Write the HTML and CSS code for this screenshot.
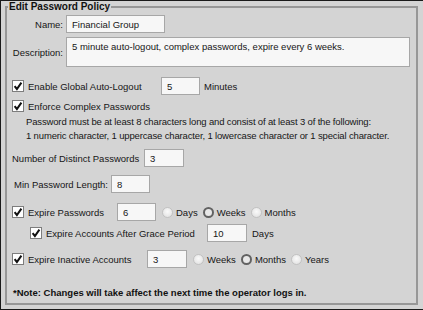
FILE: index.html
```html
<!DOCTYPE html>
<html lang="en">

<head>
    <meta charset="UTF-8">
    <meta name="viewport" content="width=device-width, initial-scale=1.0">
    <title>Edit Password Policy</title>
    <link rel="stylesheet" href="styles.css">
</head>

<body>
    <div class="window">
        <fieldset class="policy">
            <legend>Edit Password Policy</legend>

            <div class="row row-name">
                <label class="field-label">Name:</label>
                <input type="text" class="text-input name-input" value="Financial Group">
            </div>

            <div class="row row-desc">
                <label class="field-label">Description:</label>
                <textarea class="text-input desc-input">5 minute auto-logout, complex passwords, expire every 6 weeks.</textarea>
            </div>

            <div class="row row-auto">
                <span class="check"><svg width="12" height="12" viewBox="0 0 12 12"><rect x="0.5" y="0.5" width="11" height="11" fill="#fff" stroke="#7d7d7d"/><path d="M2.6 6.2 L4.9 9 L9.4 2.6" fill="none" stroke="#111" stroke-width="2"/></svg></span>
                <span class="check-text lbl-auto">Enable Global Auto-Logout</span>
                <input type="text" class="text-input small-input" value="5">
                <span class="unit">Minutes</span>
            </div>

            <div class="row row-complex">
                <span class="check"><svg width="12" height="12" viewBox="0 0 12 12"><rect x="0.5" y="0.5" width="11" height="11" fill="#fff" stroke="#7d7d7d"/><path d="M2.6 6.2 L4.9 9 L9.4 2.6" fill="none" stroke="#111" stroke-width="2"/></svg></span>
                <span class="check-text">Enforce Complex Passwords</span>
            </div>
            <div class="help-text">
                <div>Password must be at least 8 characters long and consist of at least 3 of the following:</div>
                <div>1 numeric character, 1 uppercase character, 1 lowercase character or 1 special character.</div>
            </div>

            <div class="row row-distinct">
                <label class="plain-label lbl-distinct">Number of Distinct Passwords</label>
                <input type="text" class="text-input distinct-input" value="3">
            </div>

            <div class="row row-min">
                <label class="plain-label lbl-min">Min Password Length:</label>
                <input type="text" class="text-input small-input" value="8">
            </div>

            <div class="row row-expire">
                <span class="check"><svg width="12" height="12" viewBox="0 0 12 12"><rect x="0.5" y="0.5" width="11" height="11" fill="#fff" stroke="#7d7d7d"/><path d="M2.6 6.2 L4.9 9 L9.4 2.6" fill="none" stroke="#111" stroke-width="2"/></svg></span>
                <span class="check-text lbl-expire">Expire Passwords</span>
                <input type="text" class="text-input small-input" value="6">
                <div class="radio-group">
                    <span class="radio-option"><span class="radio"></span>Days</span>
                    <span class="radio-option"><span class="radio selected"></span>Weeks</span>
                    <span class="radio-option"><span class="radio"></span>Months</span>
                </div>
            </div>

            <div class="row row-grace">
                <span class="check"><svg width="12" height="12" viewBox="0 0 12 12"><rect x="0.5" y="0.5" width="11" height="11" fill="#fff" stroke="#7d7d7d"/><path d="M2.6 6.2 L4.9 9 L9.4 2.6" fill="none" stroke="#111" stroke-width="2"/></svg></span>
                <span class="check-text lbl-grace">Expire Accounts After Grace Period</span>
                <input type="text" class="text-input distinct-input" value="10">
                <span class="unit unit-days">Days</span>
            </div>

            <div class="row row-inactive">
                <span class="check"><svg width="12" height="12" viewBox="0 0 12 12"><rect x="0.5" y="0.5" width="11" height="11" fill="#fff" stroke="#7d7d7d"/><path d="M2.6 6.2 L4.9 9 L9.4 2.6" fill="none" stroke="#111" stroke-width="2"/></svg></span>
                <span class="check-text lbl-inactive">Expire Inactive Accounts</span>
                <input type="text" class="text-input distinct-input" value="3">
                <div class="radio-group">
                    <span class="radio-option"><span class="radio"></span>Weeks</span>
                    <span class="radio-option"><span class="radio selected"></span>Months</span>
                    <span class="radio-option"><span class="radio"></span>Years</span>
                </div>
            </div>

            <p class="note">*Note: Changes will take affect the next time the operator logs in.</p>
        </fieldset>
    </div>
</body>

</html>
```

FILE: styles.css
```css
body {
    margin: 0;
    font-family: 'Liberation Sans', Arial, sans-serif;
    font-size: 9.5px;
    color: #161616;
    background-color: #d4d4d4;
}

.window {
    box-sizing: border-box;
    width: 423px;
    height: 310px;
    display: flex;
    flex-direction: column;
    padding: 0 5px 4px 4px;
    background-color: #d4d4d4;
    border-top: 1px solid #1a1a1a;
    border-left: 1px solid #1a1a1a;
    border-bottom: 1px solid #1a1a1a;
}

.policy {
    flex: 1;
    margin: 0;
    padding: 0;
    min-width: 0;
    border: 2px solid #979797;
}

.policy legend {
    font-size: 10px;
    font-weight: bold;
    line-height: 12px;
    padding: 0 1px;
    margin-left: 1px;
    color: #111;
}

.row {
    display: flex;
    align-items: center;
    height: 18px;
}

/* TEXT FIELDS */
.text-input {
    box-sizing: border-box;
    height: 18px;
    margin: 0;
    padding: 0 5px;
    font-family: inherit;
    font-size: 9.5px;
    color: #161616;
    background-color: #f7f7f7;
    border: 1px solid #a7a7a7;
    border-radius: 0;
    outline: none;
}

.field-label {
    width: 56px;
    margin-right: 3px;
    text-align: right;
}

.name-input {
    width: 99px;
}

.desc-input {
    width: 344px;
    height: 30px;
    padding: 3px 5px;
    resize: none;
    line-height: 12px;
    overflow: hidden;
}

.small-input {
    width: 39px;
}

.distinct-input {
    width: 40px;
}

/* CHECKBOXES */
.check {
    display: flex;
    width: 12px;
    height: 12px;
    margin-right: 4px;
}

.check-text {
    white-space: nowrap;
}

.unit {
    margin-left: 4px;
}

.unit-days {
    margin-left: 5px;
}

.plain-label {
    white-space: nowrap;
}

/* RADIOS */
.radio-group {
    display: flex;
    align-items: center;
    gap: 5px;
    margin-left: 6px;
}

.radio-option {
    display: flex;
    align-items: center;
}

.radio {
    box-sizing: border-box;
    width: 11px;
    height: 11px;
    margin-right: 3px;
    border-radius: 50%;
    border: 1px solid #c2c2c2;
    background: radial-gradient(circle at 50% 40%, #fafafa 0%, #e6e6e6 70%, #dadada 100%);
}

.radio.selected {
    border: 2.5px solid #626262;
    background: #e8e8e8;
}

/* ROW POSITIONS */
.row-name {
    margin-top: 2px;
    padding-left: 0;
}

.row-desc {
    height: 30px;
    margin-top: 4px;
}

.row-auto {
    margin-top: 10px;
    padding-left: 5px;
}

.lbl-auto {
    width: 133px;
}

.row-complex {
    margin-top: 2px;
    padding-left: 5px;
}

.help-text {
    margin-left: 19px;
    line-height: 14px;
    letter-spacing: -0.15px;
}

.row-distinct {
    margin-top: 6px;
    padding-left: 5px;
}

.lbl-distinct {
    width: 132px;
}

.row-min {
    margin-top: 8px;
    padding-left: 7px;
}

.lbl-min {
    width: 97px;
}

.row-expire {
    margin-top: 10px;
    padding-left: 5px;
}

.lbl-expire {
    width: 89px;
}

.row-grace {
    margin-top: 3px;
    padding-left: 23px;
}

.lbl-grace {
    width: 161px;
}

.row-inactive {
    margin-top: 8px;
    padding-left: 5px;
}

.lbl-inactive {
    width: 119px;
}

.note {
    margin: 18px 0 0 6px;
    line-height: 14px;
    font-weight: bold;
    color: #111;
}
```
